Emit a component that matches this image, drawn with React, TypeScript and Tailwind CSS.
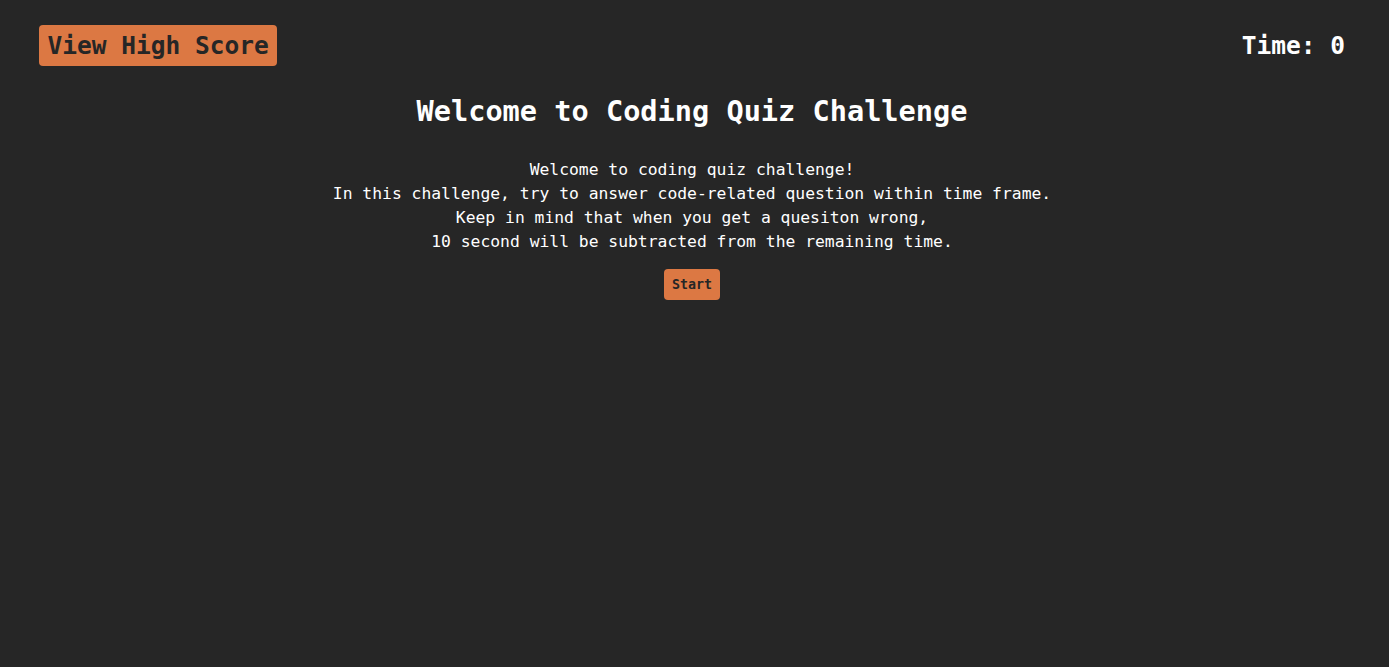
export default function App() {
  return (
    <div className="min-h-screen bg-[#262626] text-white font-['DejaVu_Sans_Mono',monospace]">
      <header className="flex items-center justify-between pl-[39px] pr-[44px] pt-[25px]">
        <button className="rounded-[4px] bg-[#dc7843] px-[8.5px] py-[6px] text-[24.5px] font-bold leading-[29px] text-[#262626]">
          View High Score
        </button>
        <div className="text-[24.5px] font-bold leading-[29px]">Time: 0</div>
      </header>

      <main className="flex flex-col items-center pr-[5px] pt-[28px]">
        <h1 className="text-[28.6px] font-bold leading-[34px]">Welcome to Coding Quiz Challenge</h1>
        <p className="mt-[30px] text-center text-[16.35px] leading-[24px]">
          Welcome to coding quiz challenge!
          <br />
          In this challenge, try to answer code-related question within time frame.
          <br />
          Keep in mind that when you get a quesiton wrong,
          <br />
          10 second will be subtracted from the remaining time.
        </p>
        <button className="mt-[15px] h-[31px] rounded-[4px] bg-[#dc7843] px-[8px] text-[13.3px] font-bold text-[#262626]">
          Start
        </button>
      </main>
    </div>
  );
}
